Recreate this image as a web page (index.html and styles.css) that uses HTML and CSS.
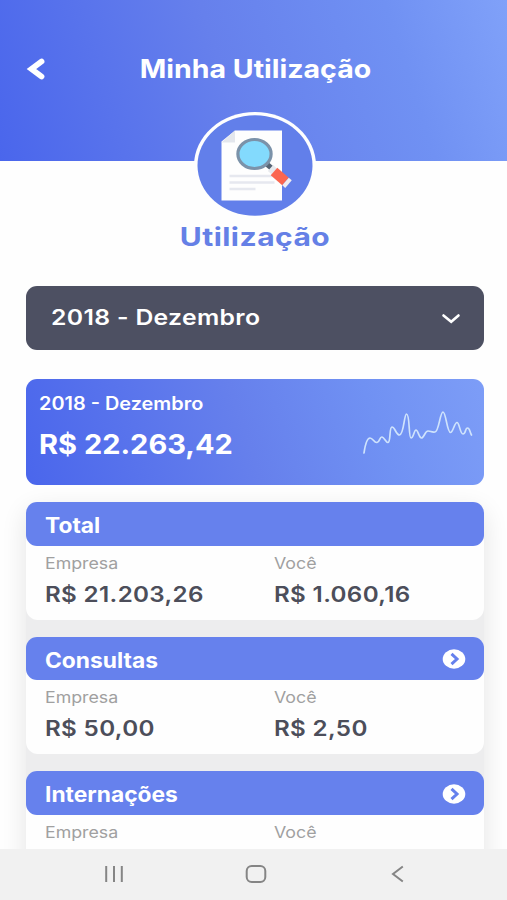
FILE: index.html
```
<!DOCTYPE html>
<html lang="pt-BR">
<head>
    <meta charset="UTF-8">
    <meta name="viewport" content="width=device-width, initial-scale=1.0">
    <title>Minha Utilização</title>
    <link rel="stylesheet" href="styles.css">
</head>
<body>

    <div class="screen">
        <header class="header">
            <svg class="back" width="20" height="24" viewBox="0 0 20 24">
                <path d="M15.500 4.500 5.500 12l10 7.500" />
            </svg>
            <h1>Minha Utilização</h1>
        </header>

        <main class="content">
            <!-- Badge -->
            <div class="badge">
                <svg width="122" height="107" viewBox="0 0 122 107">
                    <ellipse cx="61" cy="53.500" rx="61" ry="53.500" fill="#fefefe" />
                    <ellipse cx="61" cy="53.500" rx="57.500" ry="50.300" fill="#627fea" />
                    <path d="M41 18.500h47v70H27.500V29.500z" fill="#fefefe" />
                    <path d="M41 18.500v12H27.500z" fill="#e4e7ed" />
                    <path d="M35.500 64h44M35.500 70.500h45M35.500 77h26" stroke="#e6e8ef" stroke-width="2.600" />
                    <path d="M72 51.500l6 5" stroke="#556374" stroke-width="5" />
                    <path d="M76.500 56l4 3.600" stroke="#e8eaee" stroke-width="8" />
                    <path d="M80 59.500l11.500 10" stroke="#fb6650" stroke-width="10" />
                    <path d="M91.500 69.500l3 2.600" stroke="#f1edf0" stroke-width="10" />
                    <ellipse cx="60.500" cy="42" rx="16.600" ry="14.500" fill="#83dafd" stroke="#7b92a9" stroke-width="3.200" />
                </svg>
            </div>
            <h2 class="page-title">Utilização</h2>

            <div class="select">
                <span>2018 - Dezembro</span>
                <svg width="20" height="12" viewBox="0 0 20 12">
                    <path d="M2.500 2.500 10.200 8.700 17.500 2.500" />
                </svg>
            </div>

            <div class="summary">
                <div>
                    <div class="summary-label">2018 - Dezembro</div>
                    <div class="summary-value">R$ 22.263,42</div>
                </div>
                <svg class="spark" width="112" height="48" viewBox="0 0 112 48">
                    <path d="M3 44C4 37 6 29 9 29S13 34 16 33.500 18.500 27.500 21 28 25 34 27 33.500C30 33 28 18 31 18S35 26 38.500 26C43 26 43 5 45.500 5C49 5 47.500 29 50 29S53 21 55 21 58 29 60.500 29 64 22 67 22 70 23.500 74 23C78 22.500 79 3 82 3S86 23.500 89.500 23.500C92 23.500 93.500 13.500 96 13.500S99 25 102 25 104 19 106.500 19 108.500 22.500 110.500 26" />
                </svg>
            </div>

            <div class="list">
                <section class="card">
                    <div class="card-head"><h3>Total</h3></div>
                    <div class="card-body">
                        <div class="col">
                            <div class="label">Empresa</div>
                            <div class="value">R$ 21.203,26</div>
                        </div>
                        <div class="col">
                            <div class="label">Você</div>
                            <div class="value">R$ 1.060,16</div>
                        </div>
                    </div>
                </section>

                <section class="card">
                    <div class="card-head">
                        <h3>Consultas</h3>
                        <svg class="go" width="24" height="20" viewBox="0 0 24 20">
                            <ellipse cx="12" cy="10" rx="11.300" ry="9.700" />
                            <path d="M9.500 4.900 15 10 9.500 15.100" />
                        </svg>
                    </div>
                    <div class="card-body">
                        <div class="col">
                            <div class="label">Empresa</div>
                            <div class="value">R$ 50,00</div>
                        </div>
                        <div class="col">
                            <div class="label">Você</div>
                            <div class="value">R$ 2,50</div>
                        </div>
                    </div>
                </section>

                <section class="card">
                    <div class="card-head">
                        <h3>Internações</h3>
                        <svg class="go" width="24" height="20" viewBox="0 0 24 20">
                            <ellipse cx="12" cy="10" rx="11.300" ry="9.700" />
                            <path d="M9.500 4.900 15 10 9.500 15.100" />
                        </svg>
                    </div>
                    <div class="card-body">
                        <div class="col">
                            <div class="label">Empresa</div>
                        </div>
                        <div class="col">
                            <div class="label">Você</div>
                        </div>
                    </div>
                </section>
            </div>
        </main>

        <!-- Android navigation bar -->
        <nav class="navbar">
            <svg width="24" height="22" viewBox="0 0 24 22">
                <path d="M4.200 3v16M12 3v16M19.800 3v16" />
            </svg>
            <svg width="24" height="22" viewBox="0 0 24 22">
                <rect x="2.700" y="3" width="18.600" height="16" rx="5" />
            </svg>
            <svg width="24" height="22" viewBox="0 0 24 22">
                <path d="M16.800 3.500 7 11l9.800 7.500" />
            </svg>
        </nav>
    </div>

</body>
</html>
```
FILE: styles.css
```
* {
    box-sizing: border-box;
}
body {
    margin: 0;
    font-family: Inter, "Open Sans", sans-serif;
    background: #fefefe;
}
h1, h2, h3 {
    margin: 0;
}
svg {
    display: block;
    flex: none;
}
.screen {
    height: 900px;
    display: flex;
    flex-direction: column;
    overflow: hidden;
}
.header {
    flex: none;
    height: 160.500px;
    display: grid;
    grid-template-columns: 60px 1fr 56px;
    align-items: start;
    padding-top: 49px;
    background: linear-gradient(72deg, #4a66ec 0%, #6680ec 45%, #7091f3 78%, #80a1f9 100%);
    color: #fff;
}
.back {
    margin: 7.500px 0 0 25.500px;
    fill: none;
    stroke: #fff;
    stroke-width: 5.800;
    stroke-linecap: round;
}
/* wide lettering */
.header h1 {
    text-align: center;
    font-size: 25.500px;
    font-weight: 700;
    line-height: 40px;
    white-space: nowrap;
    transform: scaleX(1.117);
}
.content {
    flex: 1;
    min-height: 0;
    overflow: hidden;
    padding: 0 23px 0 26px;
    margin-top: -49px;
}
.badge {
    display: flex;
    justify-content: center;
    position: relative;
}
.page-title {
    height: 67px;
    text-align: center;
    font-size: 25px;
    font-weight: 700;
    line-height: 36px;
    letter-spacing: 0.400px;
    color: #6580e6;
    transform: scaleX(1.200);
}
.select {
    height: 64px;
    display: flex;
    align-items: center;
    justify-content: space-between;
    padding: 0 23px 2px 25px;
    border-radius: 11px;
    background: #4d5062;
    color: #fff;
    font-size: 21.500px;
    font-weight: 600;
    letter-spacing: 0.300px;
}
.select span {
    transform: scaleX(1.150);
    transform-origin: left;
}
.select svg {
    margin-top: 4px;
    fill: none;
    stroke: #fff;
    stroke-width: 2.600;
    stroke-linecap: round;
}
.summary {
    height: 106.500px;
    margin-top: 29px;
    display: flex;
    justify-content: space-between;
    padding: 12.500px 11px 0 13px;
    border-radius: 11px;
    background: linear-gradient(72deg, #4a66ec 0%, #6680ec 48%, #7091f3 75%, #7d9df7 100%);
    color: #fff;
}
.summary-label {
    font-size: 18px;
    font-weight: 600;
    line-height: 25px;
    transform: scaleX(1.105);
    transform-origin: left;
}
.summary-value {
    margin-top: 8.500px;
    font-size: 27px;
    font-weight: 700;
    line-height: 40px;
    transform: scaleX(1.074);
    transform-origin: left;
}
.spark {
    margin-top: 17.500px;
    fill: none;
    stroke: #cfe3fc;
    stroke-width: 1.700;
    stroke-linecap: round;
}
.list {
    display: flex;
    flex-direction: column;
    gap: 17px;
    margin-top: 17px;
    border-radius: 12px;
    background: #ededee;
    box-shadow: 0 8px 26px rgba(0, 0, 0, 0.110);
}
.card {
    height: 117.500px;
    border-radius: 12px;
    background: #fefefe;
}
.card-head {
    height: 43.500px;
    display: flex;
    align-items: center;
    justify-content: space-between;
    padding: 2px 18px 0 19px;
    border-radius: 11px;
    background: #6681ed;
    color: #fff;
}
.card-head h3 {
    padding-top: 2px;
    font-size: 21px;
    font-weight: 700;
    transform: scaleX(1.085);
    transform-origin: left;
}
.go ellipse {
    fill: #fff;
}
.go path {
    fill: none;
    stroke: #6681ed;
    stroke-width: 3;
}
.card-body {
    display: flex;
    padding-top: 6px;
}
.col {
    flex: 1;
    padding-left: 19px;
}
.label {
    font-size: 16px;
    line-height: 22px;
    color: #a0a0a0;
    transform: scaleX(1.110);
    transform-origin: left;
}
.value {
    margin-top: 4px;
    font-size: 21.500px;
    font-weight: 600;
    line-height: 32px;
    letter-spacing: 0.300px;
    color: #4c4e5a;
    transform: scaleX(1.125);
    transform-origin: left;
}
.navbar {
    flex: none;
    height: 51.500px;
    display: flex;
    justify-content: space-between;
    align-items: center;
    padding: 0 97px 0 102px;
    background: #f1f1f1;
    position: relative;
}
.navbar svg {
    fill: none;
    stroke: #858585;
    stroke-width: 2;
}
```
